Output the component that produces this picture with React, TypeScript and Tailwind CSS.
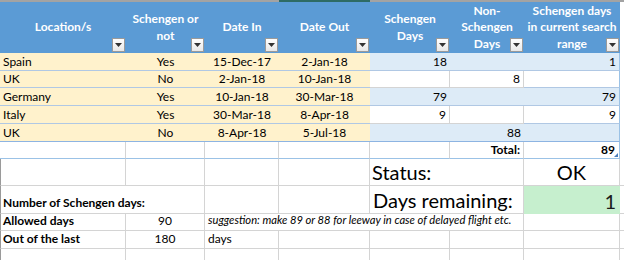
import React from 'react';

const grid = 'border-[#d4d4d4]';

type CellProps = {
  className?: string;
  children?: React.ReactNode;
};

const Cell: React.FC<CellProps> = ({ className = '', children }) => (
  <div className={`flex whitespace-nowrap overflow-visible ${className}`}>{children}</div>
);

const FilterButton = () => (
  <div className="absolute right-[1px] bottom-[1px] w-[13px] h-[14px] bg-gradient-to-b from-white to-[#e8e8e8] border border-[#9a9a9a] flex items-center justify-center">
    <svg width="7" height="4" viewBox="0 0 7 4">
      <path d="M0 0 L7 0 L3.5 4 Z" fill="#333" />
    </svg>
  </div>
);

const HeaderCell: React.FC<{ lines: string[] }> = ({ lines }) => (
  <div className="relative bg-[#5b9bd5] flex flex-col items-center justify-center text-white font-bold text-[12px] leading-[16.5px] text-center">
    {lines.map((l) => (
      <span key={l}>{l}</span>
    ))}
    <FilterButton />
  </div>
);

type Row = {
  loc: string;
  sch: string;
  dateIn: string;
  dateOut: string;
  s: string;
  ns: string;
  range: string;
};

const rows: Row[] = [
  { loc: 'Spain', sch: 'Yes', dateIn: '15-Dec-17', dateOut: '2-Jan-18', s: '18', ns: '', range: '1' },
  { loc: 'UK', sch: 'No', dateIn: '2-Jan-18', dateOut: '10-Jan-18', s: '', ns: '8', range: '' },
  { loc: 'Germany', sch: 'Yes', dateIn: '10-Jan-18', dateOut: '30-Mar-18', s: '79', ns: '', range: '79' },
  { loc: 'Italy', sch: 'Yes', dateIn: '30-Mar-18', dateOut: '8-Apr-18', s: '9', ns: '', range: '9' },
  { loc: 'UK', sch: 'No', dateIn: '8-Apr-18', dateOut: '5-Jul-18', s: '', ns: '88', range: '' },
];

export default function App() {
  return (
    <div className="w-[624px] h-[260px] overflow-hidden bg-white text-black font-['Lato',sans-serif] text-[12px]">
      {/* column selection strip */}
      <div className="flex h-[2px]">
        <div className="w-[279px] bg-[#a3a3a3]" />
        <div className="w-[91px] bg-[#2e6b64]" />
        <div className="flex-1 bg-[#a3a3a3]" />
      </div>

      <div className="grid grid-cols-[126px_79px_74px_91px_80px_74px_96px_4px] grid-rows-[51px_18px_17px_18px_18px_18px_17px_27px_28px_17px_18px_11px]">
        {/* header */}
        <HeaderCell lines={['Location/s']} />
        <HeaderCell lines={['Schengen or', 'not']} />
        <HeaderCell lines={['Date In']} />
        <HeaderCell lines={['Date Out']} />
        <HeaderCell lines={['Schengen', 'Days']} />
        <HeaderCell lines={['Non-', 'Schengen', 'Days']} />
        <HeaderCell lines={['Schengen days', 'in current search', 'range']} />
        <div className="bg-white" />

        {/* data rows */}
        {rows.map((r, i) => {
          const band = i % 2 === 0;
          const line = i === rows.length - 1 ? 'border-b border-[#8db4e2]' : 'border-b border-[#b0c8e4]';
          const right = band ? 'bg-[#ddebf7]' : `bg-white border-r ${grid}`;
          return (
            <React.Fragment key={i}>
              <Cell className={`bg-[#fff2cc] items-center pl-[3px] ${line}`}>{r.loc}</Cell>
              <Cell className={`bg-[#fff2cc] items-center justify-center ${line}`}>{r.sch}</Cell>
              <Cell className={`bg-[#fff2cc] items-center justify-center ${line}`}>{r.dateIn}</Cell>
              <Cell className={`bg-[#fff2cc] items-center justify-center ${line}`}>{r.dateOut}</Cell>
              <Cell className={`${right} items-center justify-end pr-[3px] ${line}`}>{r.s}</Cell>
              <Cell className={`${right} items-center justify-end pr-[3px] ${line}`}>{r.ns}</Cell>
              <Cell className={`${band ? 'bg-[#ddebf7]' : 'bg-white'} border-r border-r-[#9bc2e6] items-center justify-end pr-[3px] ${line}`}>
                {r.range}
              </Cell>
              <div className="bg-white" />
            </React.Fragment>
          );
        })}

        {/* total row */}
        {[0, 1, 2, 3, 4].map((k) => (
          <Cell key={k} className={`border-r ${grid} border-b border-b-[#9bc2e6]`} />
        ))}
        <Cell className={`border-r ${grid} border-b border-b-[#9bc2e6] items-center justify-end pr-[3px] font-bold`}>Total:</Cell>
        <Cell className="relative border-r border-r-[#9bc2e6] border-b border-b-[#9bc2e6] items-center justify-end pr-[4px] font-bold">
          89
          <span className="absolute right-[1px] bottom-[1px] w-0 h-0 border-l-[4px] border-l-transparent border-b-[4px] border-b-[#4a7ebb]" />
        </Cell>
        <div />

        {/* status row */}
        <Cell className={`border-l border-l-[#9a9a9a] border-r border-b ${grid}`} />
        <Cell className={`border-r border-b ${grid}`} />
        <Cell className={`border-r border-b ${grid}`} />
        <Cell className={`border-r border-b ${grid}`} />
        <Cell className={`col-span-2 border-r border-b ${grid} items-end pl-[2px] text-[20px] leading-[25px]`}>Status:</Cell>
        <Cell className={`border-r border-b ${grid} items-end justify-center text-[20px] leading-[25px]`}>OK</Cell>
        <div className={`border-b ${grid}`} />

        {/* days remaining row */}
        <Cell className={`col-span-2 border-l border-l-[#9a9a9a] border-r border-b ${grid} items-end pl-[2px] pb-[1px] font-bold`}>
          Number of Schengen days:
        </Cell>
        <Cell className={`border-r border-b ${grid}`} />
        <Cell className={`border-r border-b ${grid}`} />
        <Cell className={`col-span-2 border-r border-b ${grid} items-end pl-[3px] text-[20px] leading-[26px]`}>
          Days remaining:
        </Cell>
        <Cell className="bg-[#c6efce] items-end justify-end pr-[4px] text-[20px] leading-[26px] text-[#1a1a1a]">1</Cell>
        <div className={`border-b ${grid}`} />

        {/* allowed days row */}
        <Cell className={`border-l border-l-[#9a9a9a] border-r border-b ${grid} items-end pl-[2px] font-bold`}>Allowed days</Cell>
        <Cell className={`border-r border-b ${grid} items-end justify-center`}>90</Cell>
        <Cell className={`col-span-4 border-r border-b ${grid} items-end pl-[3px] pb-[1px] italic text-[11.2px]`}>
          suggestion: make 89 or 88 for leeway in case of delayed flight etc.
        </Cell>
        <Cell className={`border-r border-b ${grid}`} />
        <div className={`border-b ${grid}`} />

        {/* out of the last row */}
        <Cell className={`border-l border-l-[#9a9a9a] border-r border-b ${grid} items-end pl-[2px] font-bold`}>Out of the last</Cell>
        <Cell className={`border-r border-b ${grid} items-end justify-center`}>180</Cell>
        <Cell className={`border-r border-b ${grid} items-end pl-[3px]`}>days</Cell>
        <Cell className={`border-r border-b ${grid}`} />
        <Cell className={`border-r border-b ${grid}`} />
        <Cell className={`border-r border-b ${grid}`} />
        <Cell className={`border-r border-b ${grid}`} />
        <div className={`border-b ${grid}`} />

        {/* last partial row */}
        <Cell className={`border-l border-l-[#9a9a9a] border-r ${grid}`} />
        {[1, 2, 3, 4, 5, 6].map((k) => (
          <Cell key={k} className={`border-r ${grid}`} />
        ))}
        <div />
      </div>
    </div>
  );
}
